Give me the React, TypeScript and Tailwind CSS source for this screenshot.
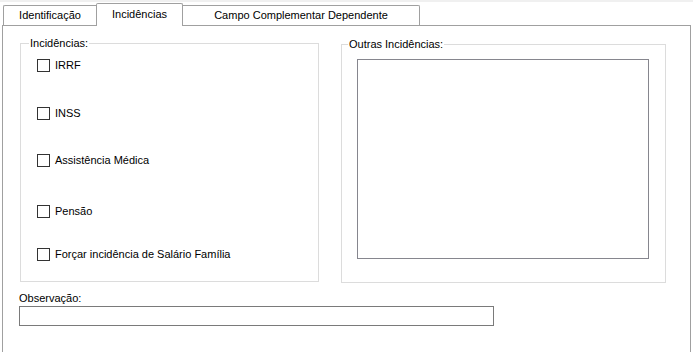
type Row = { label: string; mt: string };

const rows: Row[] = [
  { label: "IRRF", mt: "mt-[9px]" },
  { label: "INSS", mt: "mt-[35px]" },
  { label: "Assistência Médica", mt: "mt-[34px]" },
  { label: "Pensão", mt: "mt-[38px]" },
  { label: "Forçar incidência de Salário Família", mt: "mt-[30px]" },
];

const Check = ({ label, mt }: Row) => (
  <label className={`${mt} flex h-[13px] items-center pl-[16px]`}>
    <span className="h-[13px] w-[13px] border border-[#333333] bg-white" />
    <span className="ml-[5px] leading-[13px]">{label}</span>
  </label>
);

export default function App() {
  return (
    <div
      className="h-[352px] w-[693px] overflow-hidden bg-white text-[11px] text-black"
      style={{ fontFamily: '"Liberation Sans", Arial, sans-serif' }}
    >
      <div className="h-[2px] bg-[#f0f0f0]" />
      <div className="flex h-[23px] items-end pl-[3px]">
        <div className="flex h-[20px] w-[93px] items-center justify-center rounded-tl-[2px] border border-r-0 border-b-0 border-[#a0a0a0]">
          Identificação
        </div>
        <div className="relative z-10 -mb-px flex h-[23px] w-[87px] items-center justify-center rounded-t-[2px] border border-b-0 border-[#a0a0a0] bg-white pb-[2px]">
          Incidências
        </div>
        <div className="flex h-[20px] w-[237px] items-center justify-center rounded-tr-[2px] border border-l-0 border-b-0 border-[#a0a0a0]">
          Campo Complementar Dependente
        </div>
      </div>
      <div className="mx-[2px] h-[400px] border border-[#a0a0a0] pl-[17px]">
        <div className="flex items-start">
          <fieldset className="mt-[11px] h-[245px] w-[299px] border border-[#dcdcdc]">
            <legend className="ml-[8px] px-[1px] leading-[13px]">Incidências:</legend>
            <div className="flex flex-col">
              {rows.map((r) => (
                <Check key={r.label} {...r} />
              ))}
            </div>
          </fieldset>
          <fieldset className="ml-[22px] mt-[12px] h-[245px] w-[325px] border border-[#dcdcdc]">
            <legend className="ml-[6px] px-[1px] leading-[13px]">Outras Incidências:</legend>
            <div className="ml-[15px] mt-[8px] h-[200px] w-[292px] border border-[#86868e]" />
          </fieldset>
        </div>
        <div className="mt-[9px] -ml-px leading-[13px]">Observação:</div>
        <div className="-ml-[1px] mt-[1px] h-[20px] w-[475px] border border-[#7a7a7a]" />
      </div>
    </div>
  );
}
